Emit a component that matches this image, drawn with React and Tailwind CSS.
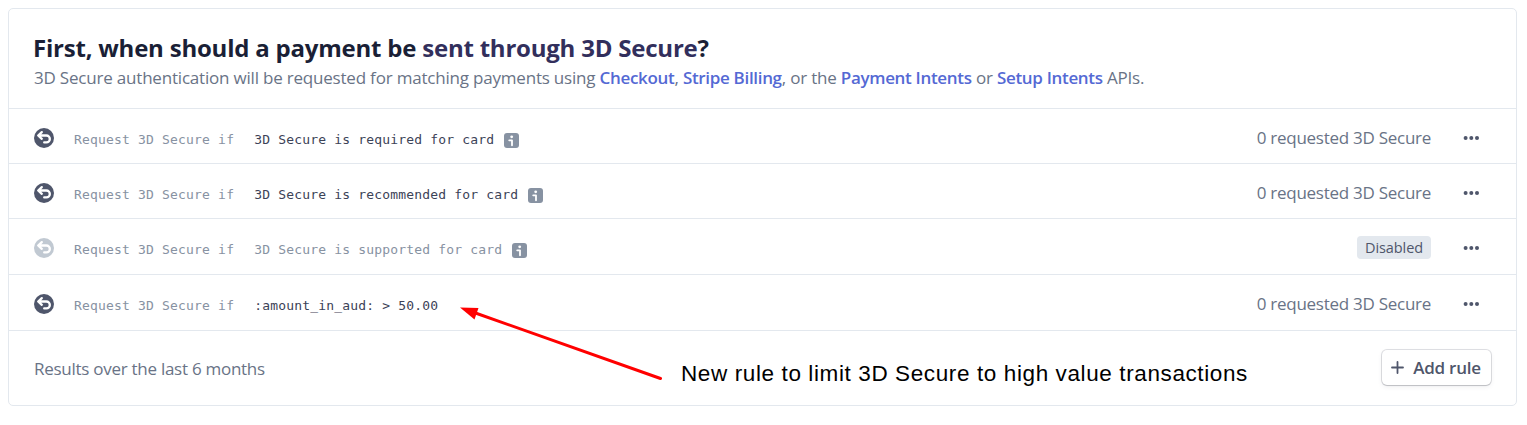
const rules = [
  { id: 1, condition: '3D Secure is required for card', info: true, enabled: true, size: 'h-[55px] pt-[3px]' },
  { id: 2, condition: '3D Secure is recommended for card', info: true, enabled: true, size: 'h-[55px] pt-[3px]' },
  { id: 3, condition: '3D Secure is supported for card', info: true, enabled: false, size: 'h-[56px] pt-[2px]' },
  { id: 4, condition: ':amount_in_aud: > 50.00', info: false, enabled: true, size: 'h-[56px] pt-[2px]' },
]

const RequestIcon = ({ className }) => (
  <svg aria-hidden="true" viewBox="0 0 20 20" className={`size-5 shrink-0 ${className}`}>
    <circle cx="10" cy="10" r="10" fill="currentColor" />
    <path d="M7.8 4.1 4.2 7.5l3.6 3.3M4.6 7.5h7.8a3.4 3.4 0 0 1 0 6.9h-2.2" fill="none" stroke="#fff" strokeWidth="2.3" strokeLinecap="round" strokeLinejoin="round" />
  </svg>
)

const InfoIcon = () => (
  <svg aria-hidden="true" viewBox="0 0 15 15" className="ml-[10px] mt-px size-[15px] shrink-0">
    <rect width="15" height="15" rx="3" fill="#8792a2" />
    <circle cx="7.7" cy="3.8" r="1.4" fill="#fff" />
    <path d="M5.2 7.3H8v5" fill="none" stroke="#fff" strokeWidth="1.8" strokeLinecap="round" strokeLinejoin="round" />
  </svg>
)

const MoreIcon = () => (
  <svg aria-hidden="true" viewBox="0 0 16 4" className="h-1 w-4" fill="currentColor">
    <circle cx="2.6" cy="2" r="2" />
    <circle cx="8.3" cy="2" r="2" />
    <circle cx="14" cy="2" r="2" />
  </svg>
)

const PlusIcon = () => (
  <svg aria-hidden="true" viewBox="0 0 13 13" className="-mt-0.5 size-[13px]">
    <path d="M6.5 1v11M1 6.5h11" stroke="currentColor" strokeWidth="1.8" strokeLinecap="round" />
  </svg>
)

const DocLink = ({ children }) => (
  <a href="#" className="font-semibold tracking-[-0.32px] text-[#5469d4]">{children}</a>
)

const Rule = ({ rule }) => (
  <li className={`flex items-center border-b border-[#e3e8ee] pl-[25px] pr-[37px] ${rule.size}`}>
    <RequestIcon className={rule.enabled ? 'text-[#4f566b]' : 'text-[#c1c9d2]'} />
    <p className="ml-5 flex items-center whitespace-pre pt-[5px] font-['DejaVu_Sans_Mono',monospace] text-[13px] leading-5 tracking-[0.18px] text-[#8792a2]">
      Request 3D Secure if
      <span className={`ml-5 ${rule.enabled ? 'text-[#3c4257]' : ''}`}>{rule.condition}</span>
      {rule.info && <InfoIcon />}
    </p>
    <div className="ml-auto flex items-center">
      {rule.enabled ?
        <span className="text-[17px] tracking-[-0.27px] text-[#697386]">0 requested 3D Secure</span>
      :
        <span className="flex h-[23px] w-[74px] items-center justify-center rounded bg-[#e3e8ee] text-[14.5px] font-medium tracking-[-0.1px] text-[#4f566b]">Disabled</span>
      }
      <button type="button" aria-label="Rule options" className="ml-8 text-[#4f566b]">
        <MoreIcon />
      </button>
    </div>
  </li>
)

const Annotation = () => (
  <div className="pointer-events-none absolute left-[460px] top-[304px] flex items-end">
    <svg aria-hidden="true" viewBox="0 0 204 78" className="h-[78px] w-[204px]">
      <path d="M14 8.5 200.5 74.5" stroke="#f00" strokeWidth="3" strokeLinecap="round" />
      <path d="M0 3.5 18.5 4 14.5 15.5Z" fill="#f00" />
    </svg>
    <span className="-mb-px ml-[17px] whitespace-nowrap font-['Liberation_Sans',sans-serif] text-[22.5px] leading-[18px] tracking-[0.61px] text-black">
      New rule to limit 3D Secure to high value transactions
    </span>
  </div>
)

const App = () => {
  return (
    <main className="relative h-[425px] bg-white p-2 pr-[10px] font-['Open_Sans',sans-serif]">
      <section className="h-[398px] rounded-[5px] border border-[#e3e8ee]">
        <header className="h-[100px] whitespace-nowrap border-b border-[#e3e8ee] pl-[25px] pt-[25px]">
          <h1 className="-ml-px text-[24px] font-bold leading-7 tracking-[-0.22px] text-[#1a1f36]">
            First, when should a payment be <span className="text-[#322f5c]">sent through 3D Secure</span>?
          </h1>
          <p className="mt-0.5 text-[17px] leading-[27px] tracking-[-0.2px] text-[#697386]">
            3D Secure authentication will be requested for matching payments using <DocLink>Checkout</DocLink>, <DocLink>Stripe Billing</DocLink>, or the <DocLink>Payment Intents</DocLink> or <DocLink>Setup Intents</DocLink> APIs.
          </p>
        </header>
        <ul>
          {rules.map(rule => <Rule key={rule.id} rule={rule} />)}
        </ul>
        <footer className="flex h-[74px] items-center justify-between pl-[25px] pr-[25px]">
          <p className="pt-px text-[17px] tracking-[-0.27px] text-[#697386]">Results over the last 6 months</p>
          <button type="button" className="mb-px flex h-[35px] w-[109px] items-center justify-center gap-[9px] whitespace-nowrap rounded-[5px] bg-white pr-px pt-px text-[17px] font-semibold tracking-[-0.25px] text-[#4f566b] shadow-[0_0_0_1px_rgba(60,66,87,0.16),0_1px_1px_rgba(0,0,0,0.12),0_2px_5px_rgba(60,66,87,0.08)]">
            <PlusIcon />
            Add rule
          </button>
        </footer>
      </section>
      <Annotation />
    </main>
  )
}

export default App
